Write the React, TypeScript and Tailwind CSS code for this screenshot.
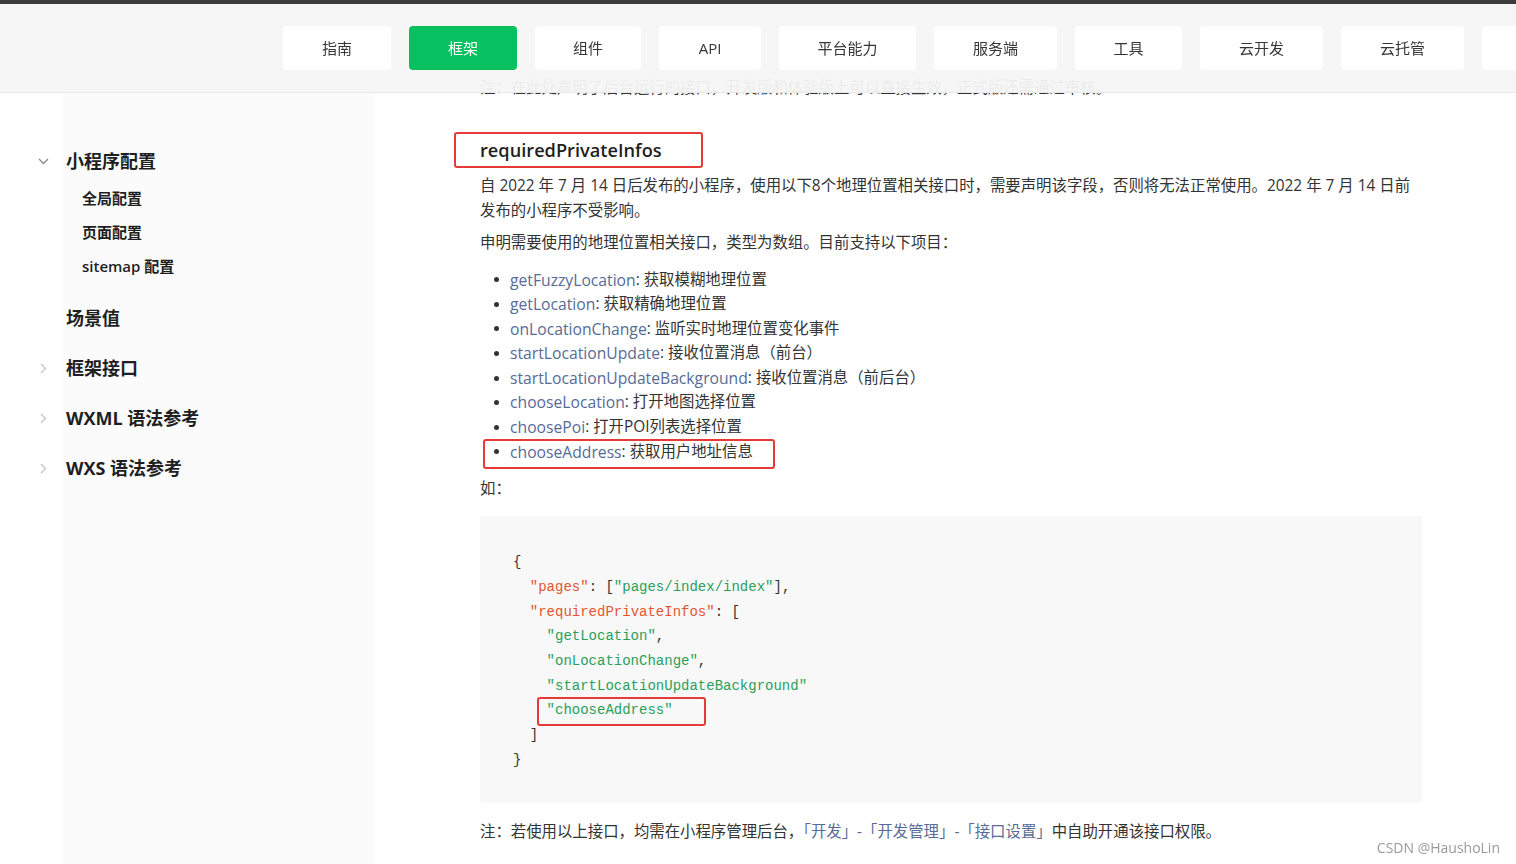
const navItems = [
  { label: "指南", w: "w-[108px]" },
  { label: "框架", w: "w-[108px]", active: true },
  { label: "组件", w: "w-[106px]" },
  { label: "API", w: "w-[102px]" },
  { label: "平台能力", w: "w-[137px]" },
  { label: "服务端", w: "w-[123px]" },
  { label: "工具", w: "w-[107px]" },
  { label: "云开发", w: "w-[123px]" },
  { label: "云托管", w: "w-[123px]" },
  { label: "", w: "w-[100px]" },
];

const apis = [
  ["getFuzzyLocation", "获取模糊地理位置"],
  ["getLocation", "获取精确地理位置"],
  ["onLocationChange", "监听实时地理位置变化事件"],
  ["startLocationUpdate", "接收位置消息（前台）"],
  ["startLocationUpdateBackground", "接收位置消息（前后台）"],
  ["chooseLocation", "打开地图选择位置"],
  ["choosePoi", "打开POI列表选择位置"],
  ["chooseAddress", "获取用户地址信息"],
];

const font = "font-['Segoe_UI','Open_Sans','Noto_Sans_CJK_SC',sans-serif]";

function ChevronDown() {
  return (
    <svg width="11" height="7" viewBox="0 0 11 7" className="text-[#8a8a8a]">
      <polyline points="1,1 5.5,5.5 10,1" fill="none" stroke="currentColor" strokeWidth="1.3" />
    </svg>
  );
}

function ChevronRight() {
  return (
    <svg width="7" height="11" viewBox="0 0 7 11" className="text-[#c4c4c4]">
      <polyline points="1,1 5.5,5.5 1,10" fill="none" stroke="currentColor" strokeWidth="1.3" />
    </svg>
  );
}

function RedBox({ className }: { className: string }) {
  return <div className={`absolute border-2 border-[#e53a35] rounded-[3px] pointer-events-none ${className}`} />;
}

function Header() {
  return (
    <header className="fixed top-0 inset-x-0 z-10">
      <div className="h-[4px] bg-[#3b3b3b]" />
      <div className="h-[89px] bg-[#f6f6f6]/95 border-b border-[#e9e9e9] overflow-hidden">
        <nav className="flex gap-[18px] pl-[283px] pt-[22px]">
          {navItems.map((n, i) => (
            <div
              key={i}
              className={`${n.w} shrink-0 h-[44px] rounded-[4px] flex items-center justify-center text-[15px] ${
                n.active ? "bg-[#07c160] text-white" : "bg-white text-[#353535]"
              }`}
            >
              {n.label}
            </div>
          ))}
        </nav>
      </div>
    </header>
  );
}

function Sidebar() {
  const top = ["框架接口", "WXML 语法参考", "WXS 语法参考"];
  return (
    <aside className="w-[374px] shrink-0 h-full bg-[linear-gradient(to_right,#ffffff_62px,#fbfbfb_62px)] pl-[38px] pt-[141px] text-[#1f1f1f]">
      <div className="flex items-center h-[40px]">
        <span className="w-[28px] flex items-center">
          <ChevronDown />
        </span>
        <span className="text-[18px] font-bold">小程序配置</span>
      </div>
      <ul className="pl-[44px] pb-[10px] text-[15px] font-semibold">
        <li className="h-[34px] flex items-center">全局配置</li>
        <li className="h-[34px] flex items-center">页面配置</li>
        <li className="h-[34px] flex items-center">sitemap 配置</li>
      </ul>
      <div className="flex items-center h-[50px]">
        <span className="w-[28px]" />
        <span className="text-[18px] font-bold">场景值</span>
      </div>
      {top.map((t) => (
        <div key={t} className="flex items-center h-[50px]">
          <span className="w-[28px] flex items-center pl-[2px]">
            <ChevronRight />
          </span>
          <span className="text-[18px] font-bold">{t}</span>
        </div>
      ))}
    </aside>
  );
}

function Code() {
  const key = "text-[#e4552f]";
  const str = "text-[#2a9f5c]";
  return (
    <pre className="mt-[15px] bg-[#f8f8f8] rounded-[4px] pl-[33px] pt-[34px] pb-[30px] font-['Liberation_Mono',monospace] text-[14px] leading-[24.7px] text-[#333]">
      <div>{"{"}</div>
      <div>
        {"  "}
        <span className={key}>"pages"</span>: [<span className={str}>"pages/index/index"</span>],
      </div>
      <div>
        {"  "}
        <span className={key}>"requiredPrivateInfos"</span>: [
      </div>
      <div>
        {"    "}
        <span className={str}>"getLocation"</span>,
      </div>
      <div>
        {"    "}
        <span className={str}>"onLocationChange"</span>,
      </div>
      <div>
        {"    "}
        <span className={str}>"startLocationUpdateBackground"</span>
      </div>
      <div className="relative">
        {"    "}
        <span className={str}>"chooseAddress"</span>
        <RedBox className="left-[24px] -top-[1px] w-[169px] h-[29px]" />
      </div>
      <div>{"  ]"}</div>
      <div>{"}"}</div>
    </pre>
  );
}

function Content() {
  return (
    <main className="ml-[106px] w-[942px] pt-[75px] text-[15.4px] text-[#333]">
      <p className="leading-[26px] whitespace-nowrap">注：在此处声明了后台运行的接口，开发版和体验版上可以直接生效，正式版还需通过审核。</p>
      <h3 className="relative mt-[34px] leading-[30px] text-[18.2px] font-semibold text-[#1f1f1f]">
        requiredPrivateInfos
        <RedBox className="-left-[26px] -top-[3px] w-[249px] h-[36px]" />
      </h3>
      <p className="mt-[7.5px] leading-[25px] whitespace-nowrap">
        自 2022 年 7 月 14 日后发布的小程序，使用以下8个地理位置相关接口时，需要声明该字段，否则将无法正常使用。2022 年 7 月 14 日前
        <br />
        发布的小程序不受影响。
      </p>
      <p className="mt-[7px] leading-[25px]">申明需要使用的地理位置相关接口，类型为数组。目前支持以下项目：</p>
      <ul className="mt-[13px] leading-[24.6px]">
        {apis.map(([name, desc], i) => (
          <li key={name} className="relative flex items-center">
            <span className="ml-[14px] mr-[11px] w-[5px] h-[5px] rounded-full bg-[#333]" />
            <span className="text-[#576b95] text-[15.7px]">{name}</span>
            <span className="text-[#333]">: {desc}</span>
            {i === apis.length - 1 && <RedBox className="left-[3px] -top-[1px] w-[292px] h-[30px]" />}
          </li>
        ))}
      </ul>
      <p className="mt-[12px] leading-[25px]">如：</p>
      <Code />
      <p className="mt-[16.5px] leading-[25px] whitespace-nowrap">
        注：若使用以上接口，均需在小程序管理后台，
        <span className="text-[#576b95]">「开发」-「开发管理」-「接口设置」</span>
        中自助开通该接口权限。
      </p>
    </main>
  );
}

export default function App() {
  return (
    <div className={`relative h-[864px] overflow-hidden bg-white ${font}`}>
      <Header />
      <div className="flex h-full">
        <Sidebar />
        <Content />
      </div>
      <div className="fixed right-[16px] bottom-[6px] text-[14px] text-[#9a9a9a]">CSDN @HaushoLin</div>
    </div>
  );
}
